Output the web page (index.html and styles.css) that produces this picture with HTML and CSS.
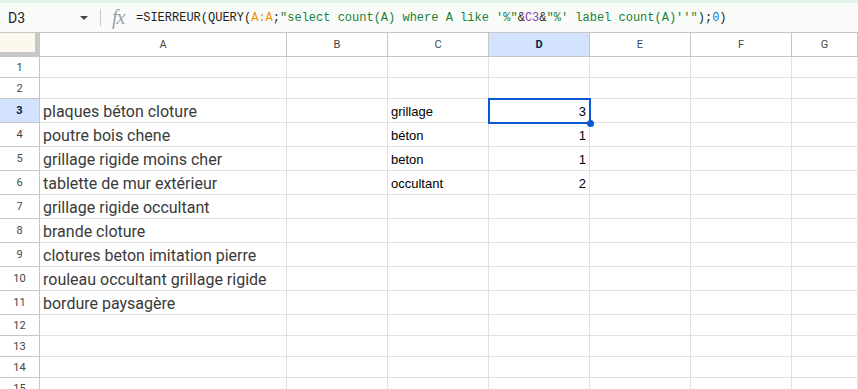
FILE: index.html
```html
<!DOCTYPE html>
<html lang="fr">
<head>
    <meta name="viewport" content="width=device-width, initial-scale=1.0">
    <title>Feuille de calcul</title>
    <link rel="stylesheet" href="styles.css">
</head>
<body>
    <div class="top-strip"></div>

    <div class="formula-bar">
        <div class="name-box">
            <span class="cell-ref">D3</span>
            <svg class="caret" width="8" height="4" viewBox="0 0 8 4"><polygon points="0,0 8,0 4,4" fill="#444746"/></svg>
        </div>
        <div class="divider"></div>
        <div class="fx">fx</div>
        <div class="formula">=SIERREUR(QUERY(<span class="f-range">A:A</span>;<span class="f-str">"select count(A) where A like '%"</span>&amp;<span class="f-ref">C3</span>&amp;<span class="f-str">"%' label count(A)''"</span>);<span class="f-num">0</span>)</div>
    </div>

    <!-- grille -->
    <div class="sheet">
        <div class="row head">
            <div class="corner"></div>
            <div class="col-head">A</div>
            <div class="col-head">B</div>
            <div class="col-head">C</div>
            <div class="col-head active">D</div>
            <div class="col-head">E</div>
            <div class="col-head">F</div>
            <div class="col-head">G</div>
        </div>

        <div class="row short">
            <div class="row-head">1</div>
            <div class="cell"></div><div class="cell"></div><div class="cell"></div><div class="cell"></div><div class="cell"></div><div class="cell"></div><div class="cell"></div>
        </div>
        <div class="row short">
            <div class="row-head">2</div>
            <div class="cell"></div><div class="cell"></div><div class="cell"></div><div class="cell"></div><div class="cell"></div><div class="cell"></div><div class="cell"></div>
        </div>
        <div class="row">
            <div class="row-head active">3</div>
            <div class="cell big">plaques béton cloture</div><div class="cell"></div>
            <div class="cell">grillage</div>
            <div class="cell num selected">3</div>
            <div class="cell"></div><div class="cell"></div><div class="cell"></div>
        </div>
        <div class="row">
            <div class="row-head">4</div>
            <div class="cell big">poutre bois chene</div><div class="cell"></div>
            <div class="cell">béton</div>
            <div class="cell num">1</div>
            <div class="cell"></div><div class="cell"></div><div class="cell"></div>
        </div>
        <div class="row">
            <div class="row-head">5</div>
            <div class="cell big">grillage rigide moins cher</div><div class="cell"></div>
            <div class="cell">beton</div>
            <div class="cell num">1</div>
            <div class="cell"></div><div class="cell"></div><div class="cell"></div>
        </div>
        <div class="row">
            <div class="row-head">6</div>
            <div class="cell big">tablette de mur extérieur</div><div class="cell"></div>
            <div class="cell">occultant</div>
            <div class="cell num">2</div>
            <div class="cell"></div><div class="cell"></div><div class="cell"></div>
        </div>
        <div class="row">
            <div class="row-head">7</div>
            <div class="cell big">grillage rigide occultant</div>
            <div class="cell"></div><div class="cell"></div><div class="cell"></div><div class="cell"></div><div class="cell"></div><div class="cell"></div>
        </div>
        <div class="row">
            <div class="row-head">8</div>
            <div class="cell big">brande cloture</div>
            <div class="cell"></div><div class="cell"></div><div class="cell"></div><div class="cell"></div><div class="cell"></div><div class="cell"></div>
        </div>
        <div class="row">
            <div class="row-head">9</div>
            <div class="cell big">clotures beton imitation pierre</div>
            <div class="cell"></div><div class="cell"></div><div class="cell"></div><div class="cell"></div><div class="cell"></div><div class="cell"></div>
        </div>
        <div class="row">
            <div class="row-head">10</div>
            <div class="cell big">rouleau occultant grillage rigide</div>
            <div class="cell"></div><div class="cell"></div><div class="cell"></div><div class="cell"></div><div class="cell"></div><div class="cell"></div>
        </div>
        <div class="row">
            <div class="row-head">11</div>
            <div class="cell big">bordure paysagère</div>
            <div class="cell"></div><div class="cell"></div><div class="cell"></div><div class="cell"></div><div class="cell"></div><div class="cell"></div>
        </div>
        <div class="row short">
            <div class="row-head">12</div>
            <div class="cell"></div><div class="cell"></div><div class="cell"></div><div class="cell"></div><div class="cell"></div><div class="cell"></div><div class="cell"></div>
        </div>
        <div class="row short">
            <div class="row-head">13</div>
            <div class="cell"></div><div class="cell"></div><div class="cell"></div><div class="cell"></div><div class="cell"></div><div class="cell"></div><div class="cell"></div>
        </div>
        <div class="row short">
            <div class="row-head">14</div>
            <div class="cell"></div><div class="cell"></div><div class="cell"></div><div class="cell"></div><div class="cell"></div><div class="cell"></div><div class="cell"></div>
        </div>
        <div class="row short">
            <div class="row-head">15</div>
            <div class="cell"></div><div class="cell"></div><div class="cell"></div><div class="cell"></div><div class="cell"></div><div class="cell"></div><div class="cell"></div>
        </div>
    </div>
</body>
</html>
```

FILE: styles.css
```css
:root {
    --grid: #e1e1e1;
    --head-line: #c4c7c5;
    --head-text: #444746;
    --sel-bg: #d3e3fd;
    --sel-text: #041e49;
    --blue: #0b57d0;
}

* {
    box-sizing: border-box;
}

body {
    margin: 0;
    background: white;
    font-family: Roboto, "Liberation Sans", sans-serif;
    overflow: hidden;
}

.top-strip {
    height: 3px;
    background: #e1f2e7;
}

.formula-bar {
    display: flex;
    align-items: center;
    height: 30px;
    background: #f9fbf9;
    border-bottom: 1px solid #c7c7c7;
}

.name-box {
    display: flex;
    align-items: center;
    width: 100px;
    padding-left: 8px;
}

.cell-ref {
    font-size: 14px;
    color: #1f1f1f;
    flex: 1;
}

.caret {
    margin-right: 12px;
}

.divider {
    width: 1px;
    height: 17px;
    background: #c7c7c7;
}

.fx {
    width: 35px;
    padding-left: 11px;
    font-family: "Liberation Serif", serif;
    font-style: italic;
    font-size: 20px;
    letter-spacing: -1px;
    color: #9aa0a6;
}

.formula {
    font-family: "Liberation Mono", monospace;
    font-size: 12px;
    color: #1f1f1f;
    white-space: nowrap;
}

.f-range { color: #f09300; }
.f-str { color: #188038; }
.f-ref { color: #8e3fb5; }
.f-num { color: #1a73e8; }

.row {
    display: grid;
    grid-template-columns: 40px 247px 101px 101px 101px 101px 101px 1fr;
    height: 24px;
}

.row.short {
    height: 21px;
}

.corner {
    background: #fdf8ee;
    border-right: 5px solid #c7c7c7;
    border-bottom: 5px solid #c7c7c7;
}

.col-head {
    display: flex;
    align-items: center;
    justify-content: center;
    font-size: 11px;
    color: var(--head-text);
    border-right: 1px solid var(--head-line);
    border-bottom: 1px solid var(--head-line);
}

.col-head.active,
.row-head.active {
    background: var(--sel-bg);
    color: var(--sel-text);
    font-weight: bold;
}

.row-head {
    display: flex;
    align-items: center;
    justify-content: center;
    font-size: 11px;
    color: var(--head-text);
    border-right: 1px solid var(--head-line);
    border-bottom: 1px solid var(--head-line);
}

.cell {
    display: flex;
    align-items: flex-end;
    padding: 0 3px 3px 3px;
    font-family: "Liberation Sans", Arial, sans-serif;
    font-size: 13px;
    color: #000;
    white-space: nowrap;
    border-right: 1px solid var(--grid);
    border-bottom: 1px solid var(--grid);
}

.cell.big {
    font-family: Roboto, sans-serif;
    font-size: 16px;
    color: #3a3a3a;
    padding-bottom: 1px;
}

.cell.num {
    justify-content: flex-end;
}

.cell.selected {
    position: relative;
}

.cell.selected::before {
    content: "";
    position: absolute;
    top: -1px;
    left: -1px;
    right: -2px;
    bottom: -2px;
    border: 2px solid var(--blue);
}

.cell.selected::after {
    content: "";
    position: absolute;
    right: -5px;
    bottom: -5px;
    width: 7px;
    height: 7px;
    border-radius: 50%;
    background: var(--blue);
}
```
